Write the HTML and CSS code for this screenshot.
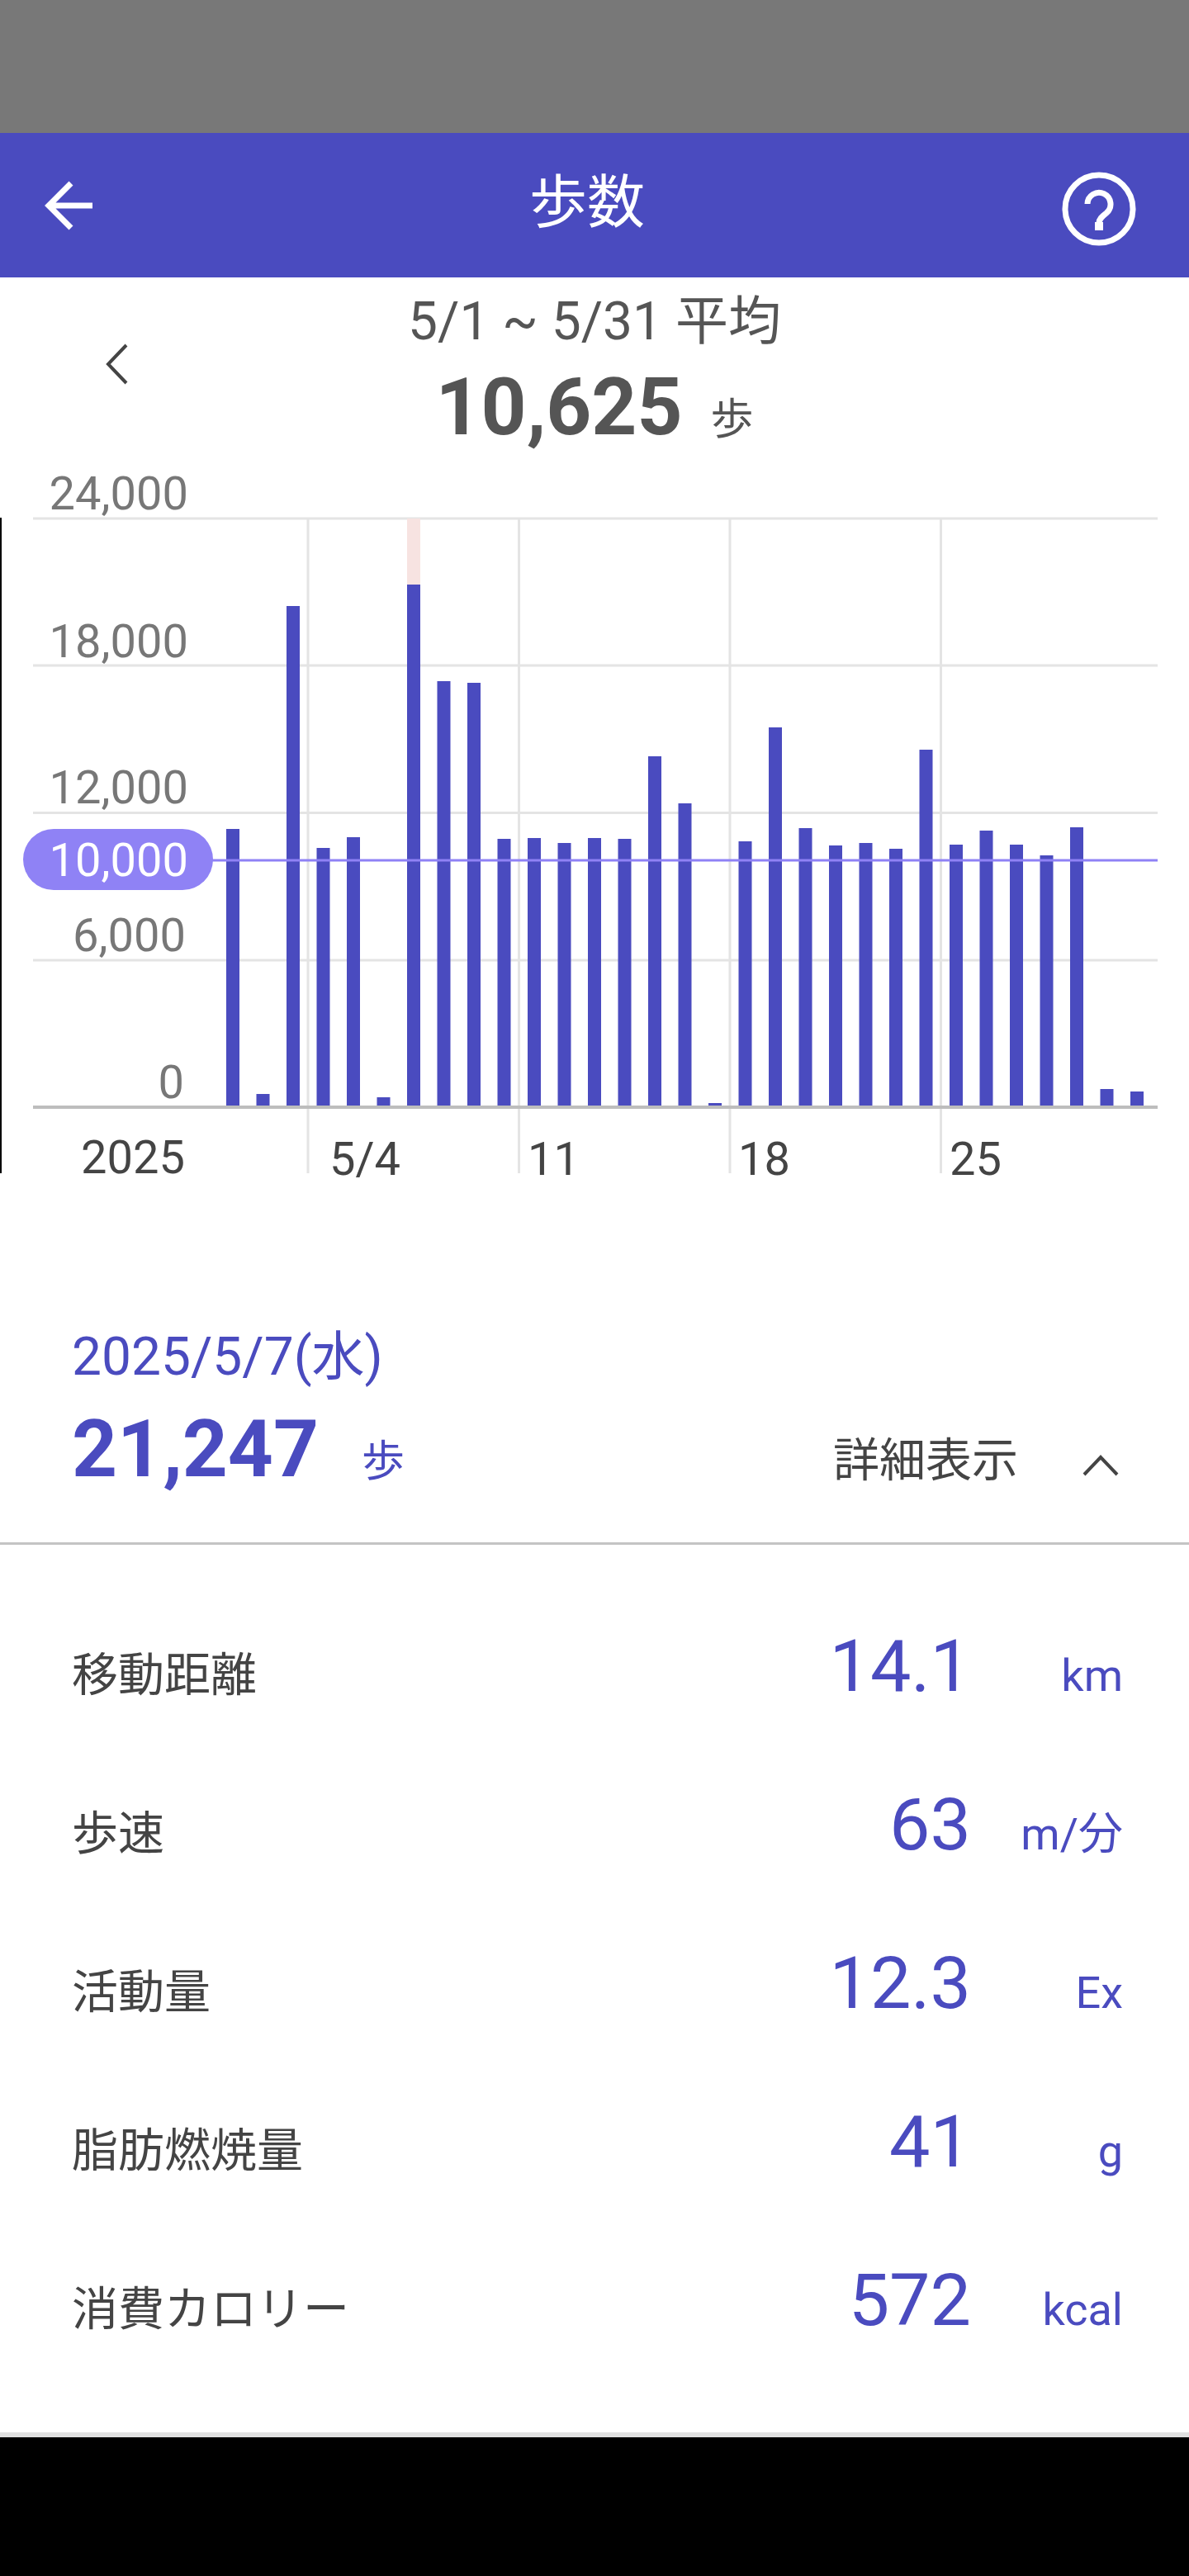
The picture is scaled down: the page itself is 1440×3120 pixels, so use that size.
FILE: index.html
```html
<!DOCTYPE html>
<html lang="ja">
<head>
  <meta charset="UTF-8">
  <title>歩数</title>
  <link rel="stylesheet" href="styles.css">
</head>
<body>
  <div class="page">
    <div class="statusBar"></div>

    <!-- ヘッダー -->
    <header class="appHeader">
      <svg class="backIcon" viewBox="0 0 64 64" width="64" height="64">
        <path d="M60 32H8M34 5L7 32l27 27" />
      </svg>
      <h1 class="appTitle">歩数</h1>
      <svg class="helpIcon" viewBox="0 0 96 96" width="96" height="96">
        <circle cx="48" cy="48" r="41" />
        <path d="M34 42a14 14 0 1 1 23 11c-5 4-9 7-9 12" />
        <rect class="helpDot" x="43" y="64" width="10" height="10" />
      </svg>
    </header>

    <!-- 期間の平均 -->
    <section class="summary">
      <svg class="prevIcon" viewBox="0 0 30 50" width="30" height="50">
        <path d="M26 2L4 25l22 23" />
      </svg>
      <div class="summaryText">
        <div class="rangeLabel">5/1 ~ 5/31 平均</div>
        <div class="rangeValue"><span class="rangeNumber">10,625</span><span class="rangeUnit">歩</span></div>
      </div>
    </section>

    <!-- グラフ -->
    <svg class="chart" viewBox="0 560 1440 880" width="1440" height="880">
      <rect class="axisEdge" x="0" y="627" width="2" height="794" />
      <rect class="grid" x="40" y="626.5" width="1362" height="3" />
      <rect class="grid" x="40" y="804.5" width="1362" height="3" />
      <rect class="grid" x="40" y="983" width="1362" height="3" />
      <rect class="grid" x="40" y="1161.5" width="1362" height="3" />
      <rect class="grid" x="371.5" y="627" width="3" height="794" />
      <rect class="grid" x="627" y="627" width="3" height="794" />
      <rect class="grid" x="882.5" y="627" width="3" height="794" />
      <rect class="grid" x="1138" y="627" width="3" height="794" />
      <rect class="highlight" x="493" y="628" width="16" height="80" />

      <rect class="bar" x="274" y="1004" width="16" height="335" />
      <rect class="bar" x="310.5" y="1325" width="16" height="14" />
      <rect class="bar" x="347" y="734" width="16" height="605" />
      <rect class="bar" x="383.5" y="1027" width="16" height="312" />
      <rect class="bar" x="420" y="1014" width="16" height="325" />
      <rect class="bar" x="456.5" y="1329" width="16" height="10" />
      <rect class="bar" x="493" y="708" width="16" height="631" />
      <rect class="bar" x="529.5" y="825" width="16" height="514" />
      <rect class="bar" x="566" y="827" width="16" height="512" />
      <rect class="bar" x="602.5" y="1016" width="16" height="323" />
      <rect class="bar" x="639" y="1015" width="16" height="324" />
      <rect class="bar" x="675.5" y="1021" width="16" height="318" />
      <rect class="bar" x="712" y="1015" width="16" height="324" />
      <rect class="bar" x="748.5" y="1016" width="16" height="323" />
      <rect class="bar" x="785" y="916" width="16" height="423" />
      <rect class="bar" x="821.5" y="973" width="16" height="366" />
      <rect class="bar" x="858" y="1336" width="16" height="3" />
      <rect class="bar" x="894.5" y="1019" width="16" height="320" />
      <rect class="bar" x="931" y="881" width="16" height="458" />
      <rect class="bar" x="967.5" y="1003" width="16" height="336" />
      <rect class="bar" x="1004" y="1024" width="16" height="315" />
      <rect class="bar" x="1040.5" y="1021" width="16" height="318" />
      <rect class="bar" x="1077" y="1028" width="16" height="311" />
      <rect class="bar" x="1113.5" y="908" width="16" height="431" />
      <rect class="bar" x="1150" y="1023" width="16" height="316" />
      <rect class="bar" x="1186.5" y="1006" width="16" height="333" />
      <rect class="bar" x="1223" y="1023" width="16" height="316" />
      <rect class="bar" x="1259.5" y="1036" width="16" height="303" />
      <rect class="bar" x="1296" y="1002" width="16" height="337" />
      <rect class="bar" x="1332.5" y="1319" width="16" height="20" />
      <rect class="bar" x="1369" y="1322" width="16" height="17" />

      <rect class="baseline" x="40" y="1339" width="1362" height="4" />
      <rect class="goalLine" x="250" y="1040.5" width="1152" height="3" />
      <rect class="goalPill" x="28" y="1004" width="230" height="74" rx="37" />

      <text class="yLabel" x="228" y="617">24,000</text>
      <text class="yLabel" x="228" y="795.5">18,000</text>
      <text class="yLabel" x="228" y="973">12,000</text>
      <text class="yLabel goalLabel" x="228" y="1061">10,000</text>
      <text class="yLabel" x="225" y="1151.5">6,000</text>
      <text class="yLabel" x="223" y="1330">0</text>

      <text class="xLabel" x="98" y="1421">2025</text>
      <text class="xLabel" x="399" y="1423">5/4</text>
      <text class="xLabel" x="639" y="1423">11</text>
      <text class="xLabel" x="894" y="1423">18</text>
      <text class="xLabel" x="1150" y="1423">25</text>
    </svg>

    <!-- 選択日 -->
    <section class="dayBlock">
      <div class="dayDate">2025/5/7(水)</div>
      <div class="dayRow">
        <span class="dayNumber">21,247</span>
        <span class="dayUnit">歩</span>
        <span class="detailToggle">詳細表示</span>
        <svg class="upIcon" viewBox="0 0 44 26" width="44" height="26">
          <path d="M2 24L22 3l20 21" />
        </svg>
      </div>
    </section>

    <!-- 詳細 -->
    <section class="details">
      <div class="detailRow">
        <span class="detailName">移動距離</span>
        <span class="detailValue">14.1</span>
        <span class="detailUnit">km</span>
      </div>
      <div class="detailRow">
        <span class="detailName">歩速</span>
        <span class="detailValue">63</span>
        <span class="detailUnit">m/分</span>
      </div>
      <div class="detailRow">
        <span class="detailName">活動量</span>
        <span class="detailValue">12.3</span>
        <span class="detailUnit">Ex</span>
      </div>
      <div class="detailRow">
        <span class="detailName">脂肪燃焼量</span>
        <span class="detailValue">41</span>
        <span class="detailUnit">g</span>
      </div>
      <div class="detailRow">
        <span class="detailName">消費カロリー</span>
        <span class="detailValue">572</span>
        <span class="detailUnit">kcal</span>
      </div>
    </section>

    <div class="navBar"></div>
  </div>
</body>
</html>
```

FILE: styles.css
```css
body {
  margin: 0;
  font-family: Roboto, "Noto Sans CJK JP", sans-serif;
  background-color: #fff;
}
.page {
  width: 1440px;
  height: 3120px;
  display: flex;
  flex-direction: column;
  overflow: hidden;
}
.statusBar {
  height: 161px;
  background-color: #787878;
}
.appHeader {
  height: 175px;
  background-color: #4a4bbf;
  display: grid;
  grid-template-columns: 1fr auto 1fr;
  align-items: center;
  padding: 0 61px 0 52px;
}
.appTitle {
  margin: 0 0 6px -9px;
  font-size: 70px;
  font-weight: 400;
  line-height: 80px;
  color: #fff;
}
.backIcon path {
  fill: none;
  stroke: #fff;
  stroke-width: 7;
}
.helpIcon {
  justify-self: end;
  margin-top: 8px;
}
.helpIcon circle,
.helpIcon path {
  fill: none;
  stroke: #fff;
  stroke-width: 7;
}
.helpIcon .helpDot {
  fill: #fff;
}
.summary {
  height: 224px;
  display: grid;
  grid-template-columns: 1fr auto 1fr;
}
.prevIcon {
  margin: 80px 0 0 127px;
}
.prevIcon path {
  fill: none;
  stroke: #444;
  stroke-width: 4;
}
.summaryText {
  grid-column: 2;
  text-align: center;
  color: #555;
}
.rangeLabel {
  margin-top: 14px;
  font-size: 64px;
  line-height: 80px;
}
.rangeValue {
  margin-top: 8px;
  line-height: 110px;
}
.rangeNumber {
  font-size: 96px;
  font-weight: 700;
}
.rangeUnit {
  margin-left: 34px;
  font-size: 52px;
}
.chart {
  display: block;
}
.axisEdge {
  fill: #000;
}
.grid {
  fill: #e4e4e4;
}
.highlight {
  fill: #f7e3e1;
}
.bar {
  fill: #4a4bbf;
}
.baseline {
  fill: #bdbdbd;
}
.goalLine,
.goalPill {
  fill: #8f82f5;
}
.yLabel {
  font-size: 56px;
  fill: #777;
  text-anchor: end;
}
.goalLabel {
  fill: #fff;
}
.xLabel {
  font-size: 56px;
  fill: #444;
}
.dayBlock {
  height: 431px;
  box-sizing: border-box;
  padding: 164px 0 0 87px;
  border-bottom: 3px solid #c4c4c4;
  color: #4a4bbf;
}
.dayDate {
  font-size: 64px;
  line-height: 80px;
}
.dayRow {
  display: flex;
  align-items: baseline;
  margin-top: 16px;
}
.dayNumber {
  font-size: 96px;
  font-weight: 700;
  line-height: 110px;
}
.dayUnit {
  margin-left: 52px;
  font-size: 52px;
}
.detailToggle {
  margin-left: auto;
  font-size: 56px;
  color: #444;
}
.upIcon {
  margin: 0 85px 0 78px;
}
.upIcon path {
  fill: none;
  stroke: #444;
  stroke-width: 4;
}
.details {
  flex: 1;
  padding: 0 80px 0 87px;
}
.detailRow {
  height: 192px;
  display: flex;
  align-items: baseline;
  color: #4a4bbf;
}
.detailRow:first-child {
  margin-top: 94px;
}
.detailName {
  margin-right: auto;
  font-size: 56px;
  color: #444;
}
.detailValue {
  font-size: 88px;
  line-height: 106px;
}
.detailUnit {
  width: 184px;
  font-size: 54px;
  text-align: right;
}
.navBar {
  height: 168px;
  background-color: #000;
  border-top: 6px solid #e0e0e0;
}
```
